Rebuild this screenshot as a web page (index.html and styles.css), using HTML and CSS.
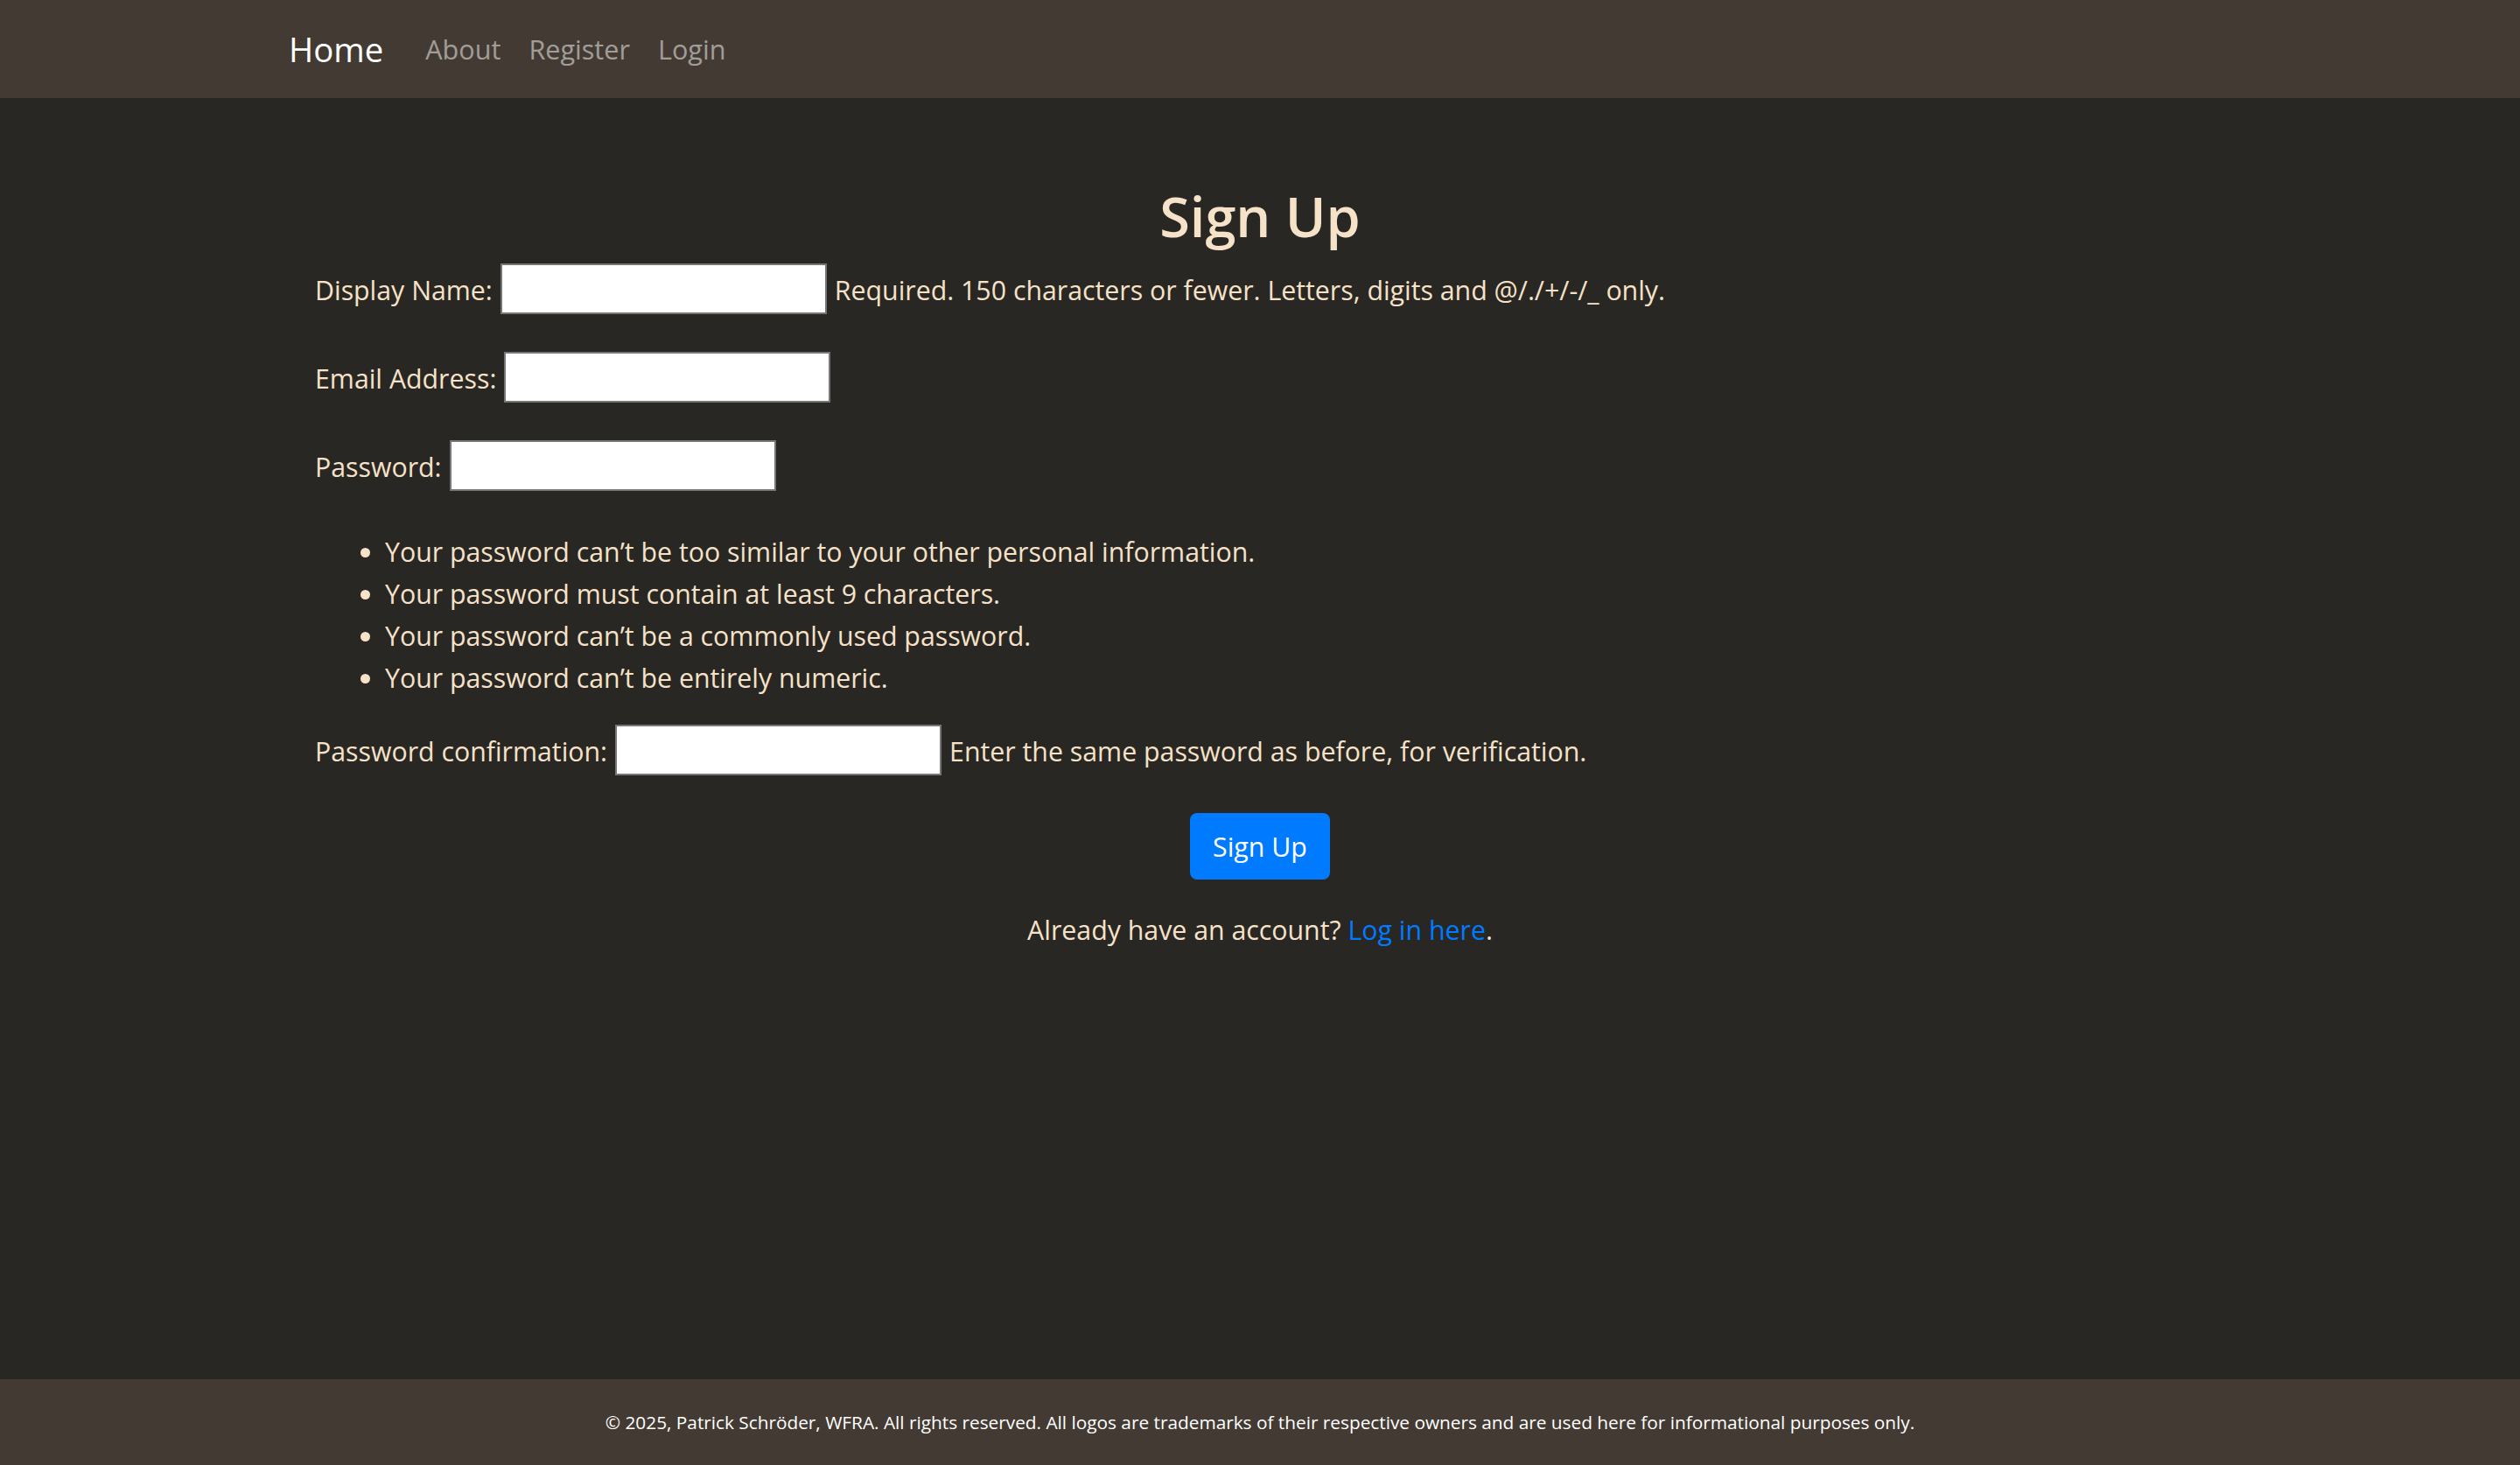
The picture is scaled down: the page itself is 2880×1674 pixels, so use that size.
FILE: index.html
```html
<!DOCTYPE html>
<html lang="en">
<head>
<meta charset="utf-8">
<title>Sign Up</title>
<link rel="stylesheet" href="styles.css">
</head>
<body>
<header class="navbar">
  <div class="nav-inner">
    <a class="brand" href="#">Home</a>
    <nav class="nav-links">
      <a class="nav-link" href="#">About</a>
      <a class="nav-link" href="#">Register</a>
      <a class="nav-link" href="#">Login</a>
    </nav>
  </div>
</header>
<main class="main">
  <h2 class="title">Sign Up</h2>
  <form class="form">
    <p class="row"><label class="label">Display Name:</label><input class="field" type="text"><span class="help">Required. 150 characters or fewer. Letters, digits and @/./+/-/_ only.</span></p>
    <p class="row"><label class="label">Email Address:</label><input class="field" type="email"></p>
    <p class="row"><label class="label">Password:</label><input class="field" type="password"></p>
    <ul class="rules">
      <li>Your password can’t be too similar to your other personal information.</li>
      <li>Your password must contain at least 9 characters.</li>
      <li>Your password can’t be a commonly used password.</li>
      <li>Your password can’t be entirely numeric.</li>
    </ul>
    <p class="row"><label class="label">Password confirmation:</label><input class="field" type="password"><span class="help">Enter the same password as before, for verification.</span></p>
    <div class="actions"><button class="btn" type="button">Sign Up</button></div>
    <p class="already">Already have an account? <a class="link" href="#">Log in here</a>.</p>
  </form>
</main>
<footer class="footer">
  <p class="copy">© 2025, Patrick Schröder, WFRA. All rights reserved. All logos are trademarks of their respective owners and are used here for informational purposes only.</p>
</footer>
</body>
</html>
```
FILE: styles.css
```css
* { box-sizing: border-box; }
html, body { margin: 0; padding: 0; }
body {
  font-family: "Open Sans", "Noto Sans", sans-serif;
  font-size: 30.3px;
  line-height: 48px;
  color: #f5e2c8;
  background: #292723;
  min-height: 100vh;
  display: flex;
  flex-direction: column;
}
.navbar {
  background: #433b33;
  padding: 16px 32px;
  height: 112px;
}
.nav-inner {
  width: 2280px;
  margin: 0 auto;
  padding: 0 30px;
  display: flex;
  align-items: center;
  height: 80px;
}
.brand {
  font-size: 38.3px;
  color: #fff;
  text-decoration: none;
  padding: 10px 0;
  margin-right: 32px;
  line-height: 60px;
}
.nav-links { display: flex; }
.nav-link {
  font-size: 30.6px;
  color: rgba(255,255,255,0.5);
  text-decoration: none;
  padding: 16px;
  line-height: 48px;
}
.main {
  flex: 1;
  width: 2280px;
  margin: 0 auto;
  padding: 96px 60px 0;
}
.title {
  text-align: center;
  font-size: 63px;
  font-weight: 600;
  line-height: 77px;
  margin: 0 0 16px;
}
.form { margin: 0; }
.row {
  display: flex;
  align-items: center;
  height: 58px;
  margin: 0 0 43px;
}
.label { margin-right: 9px; padding-top: 3px; }
.field {
  width: 373px;
  height: 58px;
  border: 2px solid #767676;
  background: #fff;
  margin: 0;
  padding: 2px 4px;
  font: inherit;
}
.help { margin-left: 9px; padding-top: 3px; }
.rules {
  margin: 0 0 29px;
  padding: 3px 0 0 80px;
}
.rules li { line-height: 48px; }
.actions {
  display: flex;
  justify-content: center;
}
.btn {
  font: inherit;
  color: #fff;
  background: #007bff;
  border: 2px solid #007bff;
  border-radius: 8px;
  padding: 13px 24px 11px;
  line-height: 48px;
  cursor: pointer;
}
.already {
  text-align: center;
  margin: 34px 0 0;
}
.link { color: #007bff; text-decoration: none; }
.footer {
  background: #433b33;
  padding: 32px 0;
  text-align: center;
}
.copy {
  margin: 0;
  font-size: 20.8px;
  line-height: 34px;
  color: #fff;
}
```
